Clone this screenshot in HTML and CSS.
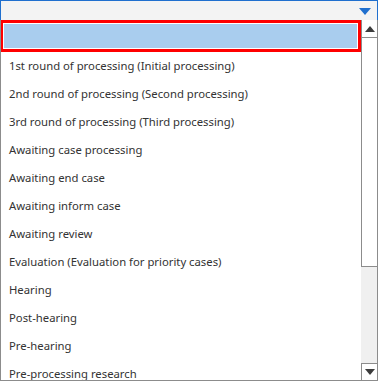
FILE: index.html
```html
<!DOCTYPE html>
<html lang="en">
<head>
    <meta charset="UTF-8">
    <title>Status dropdown</title>
    <link rel="stylesheet" href="styles.css">
</head>
<body>
    <div class="combo">
        <svg class="combo-arrow" width="12" height="7" viewBox="0 0 12 7">
            <polygon points="0,0 12,0 6,7" fill="#1f6fce"/>
        </svg>
    </div>

    <div class="dropdown">
        <ul class="list">
            <li class="item selected"></li>
            <li class="item">1st round of processing (Initial processing)</li>
            <li class="item">2nd round of processing (Second processing)</li>
            <li class="item">3rd round of processing (Third processing)</li>
            <li class="item">Awaiting case processing</li>
            <li class="item">Awaiting end case</li>
            <li class="item">Awaiting inform case</li>
            <li class="item">Awaiting review</li>
            <li class="item">Evaluation (Evaluation for priority cases)</li>
            <li class="item">Hearing</li>
            <li class="item">Post-hearing</li>
            <li class="item">Pre-hearing</li>
            <li class="item">Pre-processing research</li>
        </ul>

        <div class="scrollbar">
            <div class="scroll-btn up">
                <svg width="10" height="6" viewBox="0 0 10 6"><polygon points="0,6 10,6 5,0" fill="#3c3c3c"/></svg>
            </div>
            <div class="thumb"></div>
            <div class="track"></div>
            <div class="scroll-btn down">
                <svg width="10" height="6" viewBox="0 0 10 6"><polygon points="0,0 10,0 5,6" fill="#3c3c3c"/></svg>
            </div>
        </div>
    </div>
</body>
</html>
```

FILE: styles.css
```css
* {
    box-sizing: border-box;
    margin: 0;
    padding: 0;
}

body {
    width: 378px;
    height: 381px;
    overflow: hidden;
    background: #ffffff;
    font-family: 'Noto Sans', 'Open Sans', sans-serif;
    font-size: 11.3px;
    color: #333333;
}

.combo {
    height: 20px;
    background: #f3f3f3;
    border: 1px solid #1f6fce;
    border-bottom: none;
    display: flex;
    align-items: center;
    justify-content: flex-end;
    padding-right: 6px;
}

.combo-arrow {
    display: block;
    margin-top: 2px;
}

.dropdown {
    height: 361px;
    display: flex;
    border-left: 1px solid #8c8c8c;
    border-right: 1px solid #8c8c8c;
    border-bottom: 1px solid #8c8c8c;
}

.list {
    list-style: none;
    flex: 1;
    overflow: hidden;
}

.item {
    height: 28px;
    line-height: 28px;
    padding-left: 8px;
    white-space: nowrap;
}

.item.selected {
    height: 32px;
    margin-left: -1px;
    border: 3px solid #ff0000;
    background: #a9cdee;
    box-shadow: inset 0 0 0 1px #ffffff;
}

.scrollbar {
    width: 16px;
    display: flex;
    flex-direction: column;
    background: #f0f0f0;
}

.scroll-btn {
    height: 17px;
    background: #ffffff;
    display: flex;
    align-items: center;
    justify-content: center;
}

.scroll-btn svg {
    display: block;
}

.scroll-btn.up {
    border-left: 1px solid #8c8c8c;
}

.scroll-btn.down {
    border-left: 1px solid #8c8c8c;
    border-top: 1px solid #8c8c8c;
}

.thumb {
    height: 230px;
    background: #ffffff;
    border: 1px solid #8c8c8c;
    border-right: none;
}

.track {
    flex: 1;
}
```
